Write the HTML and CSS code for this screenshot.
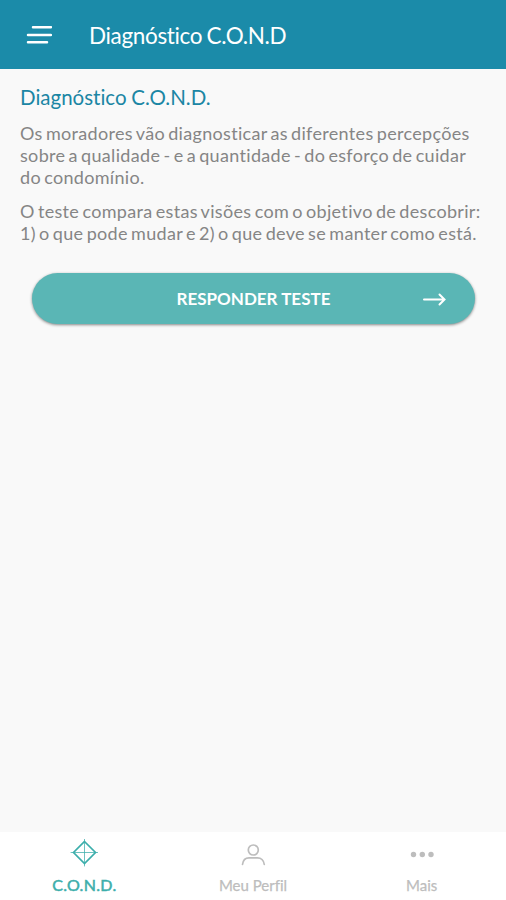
FILE: index.html
```html
<!DOCTYPE html>
<html lang="pt-BR">
<head>
<meta charset="utf-8">
<title>Diagnóstico C.O.N.D</title>
<link rel="stylesheet" href="styles.css">
</head>
<body>
<header class="topbar">
  <svg class="menu" width="26" height="20" viewBox="0 0 26 20"><path d="M7 2.200H25M2 10H25M2 17.300H21"/></svg>
  <h1>Diagnóstico C.O.N.D</h1>
</header>
<main class="content">
  <h2>Diagnóstico C.O.N.D.</h2>
  <p class="intro"><span>Os moradores vão diagnosticar as diferentes percepções</span><br><span>sobre a qualidade - e a quantidade - do esforço de cuidar</span><br><span>do condomínio.</span></p>
  <p class="goal"><span>O teste compara estas visões com o objetivo de descobrir:</span><br><span>1) o que pode mudar e 2) o que deve se manter como está.</span></p>
  <button class="cta" type="button"><span>RESPONDER TESTE</span>
    <svg width="24" height="14" viewBox="0 0 24 14"><path d="M2 7.500H22M17.500 2.500L22.500 7.500L17.500 12.500"/></svg>
  </button>
</main>
<nav class="tabs">
  <a class="tab active"><svg width="28" height="28" viewBox="0 0 28 28"><path class="axis" d="M14.500 0V27M1 13.500H28"/><path d="M14.500 2.500L25.500 13.500L14.500 24.500L3.500 13.500Z"/></svg><span>C.O.N.D.</span></a>
  <a class="tab"><svg width="28" height="28" viewBox="0 0 28 28"><circle cx="14.300" cy="11" r="5"/><path d="M3.500 25.500C4 21.500 6.500 18.800 10 18.800H18.500C22 18.800 24.800 21.500 25.300 25.500"/></svg><span>Meu Perfil</span></a>
  <a class="tab more"><svg width="28" height="28" viewBox="0 0 28 28"><circle cx="5.500" cy="15.500" r="2.700"/><circle cx="14.300" cy="15.500" r="2.700"/><circle cx="23" cy="15.500" r="2.700"/></svg><span>Mais</span></a>
</nav>
</body>
</html>
```
FILE: styles.css
```css
* { box-sizing: border-box; }
body { margin: 0; height: 900px; display: flex; flex-direction: column; background: #f9f9f9; font-family: Lato, sans-serif; font-variant-ligatures: none; }
svg { fill: none; stroke: currentColor; stroke-width: 2; stroke-linecap: round; }
.topbar { height: 69px; background: #1b8ba9; color: #fff; display: flex; align-items: center; padding: 0 0 0 26px; gap: 37px; }
.menu { stroke-width: 2.500; }
h1 { margin: 1px 0 0; font-size: 22.500px; font-weight: 400; letter-spacing: -.35px; word-spacing: -1px; }
.content { flex: 1; padding: 15px 20px; color: #858585; }
h2 { margin: 0; font-size: 20.500px; line-height: 26px; font-weight: 400; letter-spacing: 0; word-spacing: -.5px; color: #1b86a4; }
p { margin: 12px 0 0; font-size: 18px; line-height: 22px; letter-spacing: .32px; word-spacing: -1.700px; white-space: nowrap; }
.cta { margin: 29px 11px 0 12px; width: 443px; height: 51px; border: 0; border-radius: 26px; background: #5ab6b5; color: #fff; font: 700 17px Lato, sans-serif; box-shadow: 0 1px 3px #0007; display: grid; grid-template-columns: 1fr auto 1fr; align-items: center; padding: 0 29px; }
.cta span { grid-column: 2; }
.cta svg { justify-self: end; }
.tabs { height: 68px; background: #fff; display: grid; grid-template-columns: repeat(3, 1fr); }
.tab { display: flex; flex-direction: column; align-items: center; padding-top: 7px; color: #bdbdbd; font-size: 15px; font-weight: 400; line-height: 18px; }
.tab span { margin-top: 9px; -webkit-text-stroke: .25px currentColor; }
.tab.active { color: #3caeab; font-size: 16px; letter-spacing: .3px; }
.tab.active span { -webkit-text-stroke-width: .5px; }
.tab svg { stroke-width: 1.700; }
.tab .axis { stroke-width: 1; opacity: .75; }
.more svg { fill: currentColor; stroke: none; }
```
